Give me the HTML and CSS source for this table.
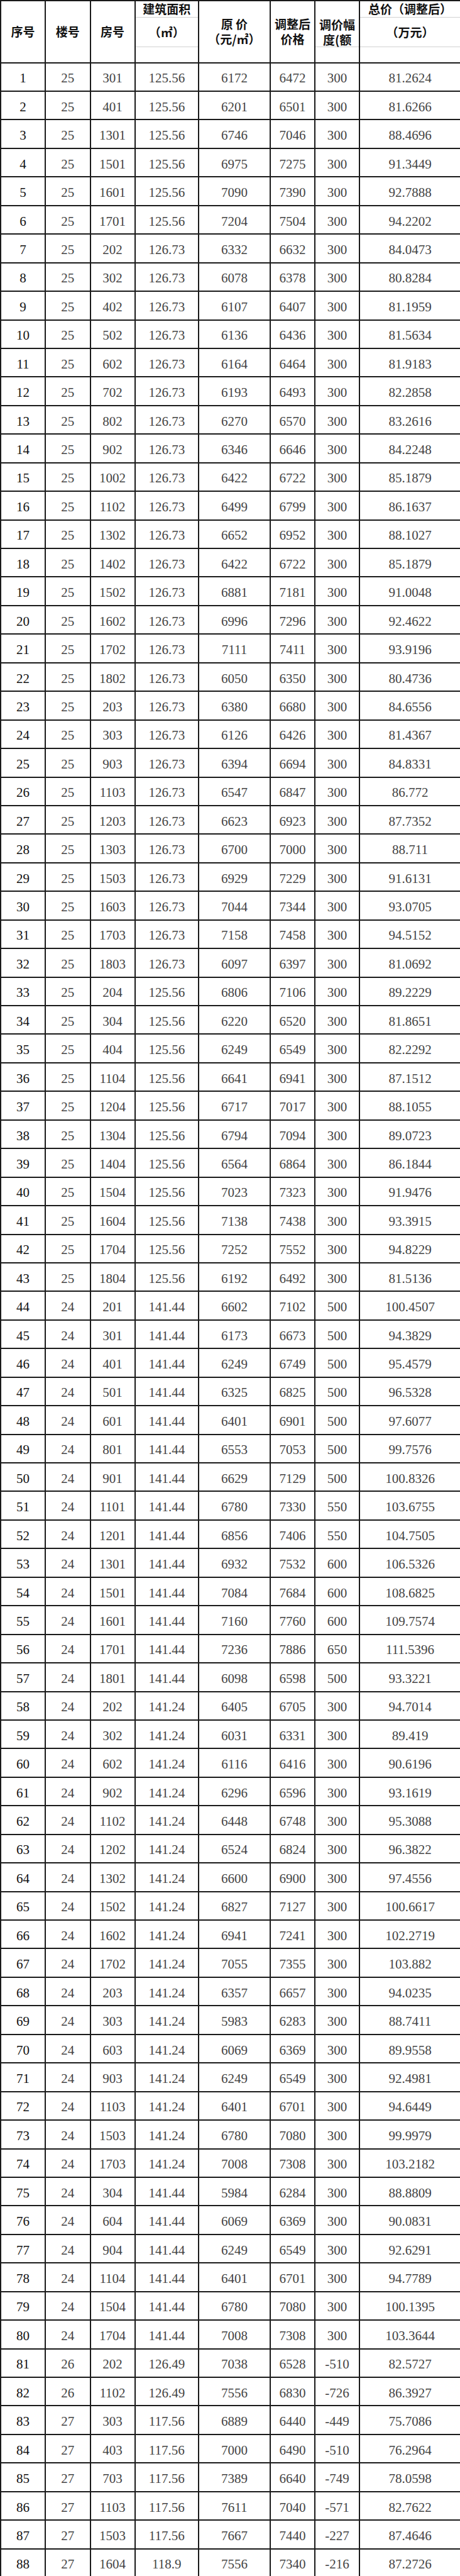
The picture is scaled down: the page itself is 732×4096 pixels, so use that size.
FILE: index.html
```html
<!DOCTYPE html>
<html lang="zh-CN">
<head>
<meta charset="utf-8">
<title>调价表</title>
<link rel="stylesheet" href="styles.css">
</head>
<body>
<table class="price">
<colgroup>
<col class="c1"><col class="c2"><col class="c3"><col class="c4"><col class="c5"><col class="c6"><col class="c7"><col class="c8">
</colgroup>
<thead>
<tr class="ha">
<th rowspan="3">序号</th>
<th rowspan="3">楼号</th>
<th rowspan="3">房号</th>
<th class="g-bottom">建筑面积</th>
<th rowspan="3">原 价<br>（元/㎡）</th>
<th rowspan="3">调整后<br>价格</th>
<th rowspan="2" class="g-bottom adj"><div class="adj-box">调价幅<br>度(额</div></th>
<th class="g-bottom">总价（调整后）</th>
</tr>
<tr class="hb">
<th class="g-top g-bottom">（㎡）</th>
<th class="g-top g-bottom">（万元）</th>
</tr>
<tr class="hc">
<th class="g-top"></th>
<th class="g-top"></th>
<th class="g-top"></th>
</tr>
</thead>
<tbody>
<tr><td class="seq">1</td><td>25</td><td>301</td><td>125.56</td><td>6172</td><td>6472</td><td>300</td><td>81.2624</td></tr>
<tr><td class="seq">2</td><td>25</td><td>401</td><td>125.56</td><td>6201</td><td>6501</td><td>300</td><td>81.6266</td></tr>
<tr><td class="seq">3</td><td>25</td><td>1301</td><td>125.56</td><td>6746</td><td>7046</td><td>300</td><td>88.4696</td></tr>
<tr><td class="seq">4</td><td>25</td><td>1501</td><td>125.56</td><td>6975</td><td>7275</td><td>300</td><td>91.3449</td></tr>
<tr><td class="seq">5</td><td>25</td><td>1601</td><td>125.56</td><td>7090</td><td>7390</td><td>300</td><td>92.7888</td></tr>
<tr><td class="seq">6</td><td>25</td><td>1701</td><td>125.56</td><td>7204</td><td>7504</td><td>300</td><td>94.2202</td></tr>
<tr><td class="seq">7</td><td>25</td><td>202</td><td>126.73</td><td>6332</td><td>6632</td><td>300</td><td>84.0473</td></tr>
<tr><td class="seq">8</td><td>25</td><td>302</td><td>126.73</td><td>6078</td><td>6378</td><td>300</td><td>80.8284</td></tr>
<tr><td class="seq">9</td><td>25</td><td>402</td><td>126.73</td><td>6107</td><td>6407</td><td>300</td><td>81.1959</td></tr>
<tr><td class="seq">10</td><td>25</td><td>502</td><td>126.73</td><td>6136</td><td>6436</td><td>300</td><td>81.5634</td></tr>
<tr><td class="seq">11</td><td>25</td><td>602</td><td>126.73</td><td>6164</td><td>6464</td><td>300</td><td>81.9183</td></tr>
<tr><td class="seq">12</td><td>25</td><td>702</td><td>126.73</td><td>6193</td><td>6493</td><td>300</td><td>82.2858</td></tr>
<tr><td class="seq">13</td><td>25</td><td>802</td><td>126.73</td><td>6270</td><td>6570</td><td>300</td><td>83.2616</td></tr>
<tr><td class="seq">14</td><td>25</td><td>902</td><td>126.73</td><td>6346</td><td>6646</td><td>300</td><td>84.2248</td></tr>
<tr><td class="seq">15</td><td>25</td><td>1002</td><td>126.73</td><td>6422</td><td>6722</td><td>300</td><td>85.1879</td></tr>
<tr><td class="seq">16</td><td>25</td><td>1102</td><td>126.73</td><td>6499</td><td>6799</td><td>300</td><td>86.1637</td></tr>
<tr><td class="seq">17</td><td>25</td><td>1302</td><td>126.73</td><td>6652</td><td>6952</td><td>300</td><td>88.1027</td></tr>
<tr><td class="seq">18</td><td>25</td><td>1402</td><td>126.73</td><td>6422</td><td>6722</td><td>300</td><td>85.1879</td></tr>
<tr><td class="seq">19</td><td>25</td><td>1502</td><td>126.73</td><td>6881</td><td>7181</td><td>300</td><td>91.0048</td></tr>
<tr><td class="seq">20</td><td>25</td><td>1602</td><td>126.73</td><td>6996</td><td>7296</td><td>300</td><td>92.4622</td></tr>
<tr><td class="seq">21</td><td>25</td><td>1702</td><td>126.73</td><td>7111</td><td>7411</td><td>300</td><td>93.9196</td></tr>
<tr><td class="seq">22</td><td>25</td><td>1802</td><td>126.73</td><td>6050</td><td>6350</td><td>300</td><td>80.4736</td></tr>
<tr><td class="seq">23</td><td>25</td><td>203</td><td>126.73</td><td>6380</td><td>6680</td><td>300</td><td>84.6556</td></tr>
<tr><td class="seq">24</td><td>25</td><td>303</td><td>126.73</td><td>6126</td><td>6426</td><td>300</td><td>81.4367</td></tr>
<tr><td class="seq">25</td><td>25</td><td>903</td><td>126.73</td><td>6394</td><td>6694</td><td>300</td><td>84.8331</td></tr>
<tr><td class="seq">26</td><td>25</td><td>1103</td><td>126.73</td><td>6547</td><td>6847</td><td>300</td><td>86.772</td></tr>
<tr><td class="seq">27</td><td>25</td><td>1203</td><td>126.73</td><td>6623</td><td>6923</td><td>300</td><td>87.7352</td></tr>
<tr><td class="seq">28</td><td>25</td><td>1303</td><td>126.73</td><td>6700</td><td>7000</td><td>300</td><td>88.711</td></tr>
<tr><td class="seq">29</td><td>25</td><td>1503</td><td>126.73</td><td>6929</td><td>7229</td><td>300</td><td>91.6131</td></tr>
<tr><td class="seq">30</td><td>25</td><td>1603</td><td>126.73</td><td>7044</td><td>7344</td><td>300</td><td>93.0705</td></tr>
<tr><td class="seq">31</td><td>25</td><td>1703</td><td>126.73</td><td>7158</td><td>7458</td><td>300</td><td>94.5152</td></tr>
<tr><td class="seq">32</td><td>25</td><td>1803</td><td>126.73</td><td>6097</td><td>6397</td><td>300</td><td>81.0692</td></tr>
<tr><td class="seq">33</td><td>25</td><td>204</td><td>125.56</td><td>6806</td><td>7106</td><td>300</td><td>89.2229</td></tr>
<tr><td class="seq">34</td><td>25</td><td>304</td><td>125.56</td><td>6220</td><td>6520</td><td>300</td><td>81.8651</td></tr>
<tr><td class="seq">35</td><td>25</td><td>404</td><td>125.56</td><td>6249</td><td>6549</td><td>300</td><td>82.2292</td></tr>
<tr><td class="seq">36</td><td>25</td><td>1104</td><td>125.56</td><td>6641</td><td>6941</td><td>300</td><td>87.1512</td></tr>
<tr><td class="seq">37</td><td>25</td><td>1204</td><td>125.56</td><td>6717</td><td>7017</td><td>300</td><td>88.1055</td></tr>
<tr><td class="seq">38</td><td>25</td><td>1304</td><td>125.56</td><td>6794</td><td>7094</td><td>300</td><td>89.0723</td></tr>
<tr><td class="seq">39</td><td>25</td><td>1404</td><td>125.56</td><td>6564</td><td>6864</td><td>300</td><td>86.1844</td></tr>
<tr><td class="seq">40</td><td>25</td><td>1504</td><td>125.56</td><td>7023</td><td>7323</td><td>300</td><td>91.9476</td></tr>
<tr><td class="seq">41</td><td>25</td><td>1604</td><td>125.56</td><td>7138</td><td>7438</td><td>300</td><td>93.3915</td></tr>
<tr><td class="seq">42</td><td>25</td><td>1704</td><td>125.56</td><td>7252</td><td>7552</td><td>300</td><td>94.8229</td></tr>
<tr><td class="seq">43</td><td>25</td><td>1804</td><td>125.56</td><td>6192</td><td>6492</td><td>300</td><td>81.5136</td></tr>
<tr><td class="seq">44</td><td>24</td><td>201</td><td>141.44</td><td>6602</td><td>7102</td><td>500</td><td>100.4507</td></tr>
<tr><td class="seq">45</td><td>24</td><td>301</td><td>141.44</td><td>6173</td><td>6673</td><td>500</td><td>94.3829</td></tr>
<tr><td class="seq">46</td><td>24</td><td>401</td><td>141.44</td><td>6249</td><td>6749</td><td>500</td><td>95.4579</td></tr>
<tr><td class="seq">47</td><td>24</td><td>501</td><td>141.44</td><td>6325</td><td>6825</td><td>500</td><td>96.5328</td></tr>
<tr><td class="seq">48</td><td>24</td><td>601</td><td>141.44</td><td>6401</td><td>6901</td><td>500</td><td>97.6077</td></tr>
<tr><td class="seq">49</td><td>24</td><td>801</td><td>141.44</td><td>6553</td><td>7053</td><td>500</td><td>99.7576</td></tr>
<tr><td class="seq">50</td><td>24</td><td>901</td><td>141.44</td><td>6629</td><td>7129</td><td>500</td><td>100.8326</td></tr>
<tr><td class="seq">51</td><td>24</td><td>1101</td><td>141.44</td><td>6780</td><td>7330</td><td>550</td><td>103.6755</td></tr>
<tr><td class="seq">52</td><td>24</td><td>1201</td><td>141.44</td><td>6856</td><td>7406</td><td>550</td><td>104.7505</td></tr>
<tr><td class="seq">53</td><td>24</td><td>1301</td><td>141.44</td><td>6932</td><td>7532</td><td>600</td><td>106.5326</td></tr>
<tr><td class="seq">54</td><td>24</td><td>1501</td><td>141.44</td><td>7084</td><td>7684</td><td>600</td><td>108.6825</td></tr>
<tr><td class="seq">55</td><td>24</td><td>1601</td><td>141.44</td><td>7160</td><td>7760</td><td>600</td><td>109.7574</td></tr>
<tr><td class="seq">56</td><td>24</td><td>1701</td><td>141.44</td><td>7236</td><td>7886</td><td>650</td><td>111.5396</td></tr>
<tr><td class="seq">57</td><td>24</td><td>1801</td><td>141.44</td><td>6098</td><td>6598</td><td>500</td><td>93.3221</td></tr>
<tr><td class="seq">58</td><td>24</td><td>202</td><td>141.24</td><td>6405</td><td>6705</td><td>300</td><td>94.7014</td></tr>
<tr><td class="seq">59</td><td>24</td><td>302</td><td>141.24</td><td>6031</td><td>6331</td><td>300</td><td>89.419</td></tr>
<tr><td class="seq">60</td><td>24</td><td>602</td><td>141.24</td><td>6116</td><td>6416</td><td>300</td><td>90.6196</td></tr>
<tr><td class="seq">61</td><td>24</td><td>902</td><td>141.24</td><td>6296</td><td>6596</td><td>300</td><td>93.1619</td></tr>
<tr><td class="seq">62</td><td>24</td><td>1102</td><td>141.24</td><td>6448</td><td>6748</td><td>300</td><td>95.3088</td></tr>
<tr><td class="seq">63</td><td>24</td><td>1202</td><td>141.24</td><td>6524</td><td>6824</td><td>300</td><td>96.3822</td></tr>
<tr><td class="seq">64</td><td>24</td><td>1302</td><td>141.24</td><td>6600</td><td>6900</td><td>300</td><td>97.4556</td></tr>
<tr><td class="seq">65</td><td>24</td><td>1502</td><td>141.24</td><td>6827</td><td>7127</td><td>300</td><td>100.6617</td></tr>
<tr><td class="seq">66</td><td>24</td><td>1602</td><td>141.24</td><td>6941</td><td>7241</td><td>300</td><td>102.2719</td></tr>
<tr><td class="seq">67</td><td>24</td><td>1702</td><td>141.24</td><td>7055</td><td>7355</td><td>300</td><td>103.882</td></tr>
<tr><td class="seq">68</td><td>24</td><td>203</td><td>141.24</td><td>6357</td><td>6657</td><td>300</td><td>94.0235</td></tr>
<tr><td class="seq">69</td><td>24</td><td>303</td><td>141.24</td><td>5983</td><td>6283</td><td>300</td><td>88.7411</td></tr>
<tr><td class="seq">70</td><td>24</td><td>603</td><td>141.24</td><td>6069</td><td>6369</td><td>300</td><td>89.9558</td></tr>
<tr><td class="seq">71</td><td>24</td><td>903</td><td>141.24</td><td>6249</td><td>6549</td><td>300</td><td>92.4981</td></tr>
<tr><td class="seq">72</td><td>24</td><td>1103</td><td>141.24</td><td>6401</td><td>6701</td><td>300</td><td>94.6449</td></tr>
<tr><td class="seq">73</td><td>24</td><td>1503</td><td>141.24</td><td>6780</td><td>7080</td><td>300</td><td>99.9979</td></tr>
<tr><td class="seq">74</td><td>24</td><td>1703</td><td>141.24</td><td>7008</td><td>7308</td><td>300</td><td>103.2182</td></tr>
<tr><td class="seq">75</td><td>24</td><td>304</td><td>141.44</td><td>5984</td><td>6284</td><td>300</td><td>88.8809</td></tr>
<tr><td class="seq">76</td><td>24</td><td>604</td><td>141.44</td><td>6069</td><td>6369</td><td>300</td><td>90.0831</td></tr>
<tr><td class="seq">77</td><td>24</td><td>904</td><td>141.44</td><td>6249</td><td>6549</td><td>300</td><td>92.6291</td></tr>
<tr><td class="seq">78</td><td>24</td><td>1104</td><td>141.44</td><td>6401</td><td>6701</td><td>300</td><td>94.7789</td></tr>
<tr><td class="seq">79</td><td>24</td><td>1504</td><td>141.44</td><td>6780</td><td>7080</td><td>300</td><td>100.1395</td></tr>
<tr><td class="seq">80</td><td>24</td><td>1704</td><td>141.44</td><td>7008</td><td>7308</td><td>300</td><td>103.3644</td></tr>
<tr><td class="seq">81</td><td>26</td><td>202</td><td>126.49</td><td>7038</td><td>6528</td><td>-510</td><td>82.5727</td></tr>
<tr><td class="seq">82</td><td>26</td><td>1102</td><td>126.49</td><td>7556</td><td>6830</td><td>-726</td><td>86.3927</td></tr>
<tr><td class="seq">83</td><td>27</td><td>303</td><td>117.56</td><td>6889</td><td>6440</td><td>-449</td><td>75.7086</td></tr>
<tr><td class="seq">84</td><td>27</td><td>403</td><td>117.56</td><td>7000</td><td>6490</td><td>-510</td><td>76.2964</td></tr>
<tr><td class="seq">85</td><td>27</td><td>703</td><td>117.56</td><td>7389</td><td>6640</td><td>-749</td><td>78.0598</td></tr>
<tr><td class="seq">86</td><td>27</td><td>1103</td><td>117.56</td><td>7611</td><td>7040</td><td>-571</td><td>82.7622</td></tr>
<tr><td class="seq">87</td><td>27</td><td>1503</td><td>117.56</td><td>7667</td><td>7440</td><td>-227</td><td>87.4646</td></tr>
<tr><td class="seq">88</td><td>27</td><td>1604</td><td>118.9</td><td>7556</td><td>7340</td><td>-216</td><td>87.2726</td></tr>
</tbody>
</table>
</body>
</html>
```
FILE: styles.css
```css
html, body {
  margin: 0;
  padding: 0;
  background: #fff;
}

.price {
  border-collapse: collapse;
  table-layout: fixed;
  width: 732px;
}

.c1 { width: 71px; }
.c2 { width: 71.5px; }
.c3 { width: 71px; }
.c4 { width: 101.7px; }
.c5 { width: 113.5px; }
.c6 { width: 71.4px; }
.c7 { width: 71px; }
.c8 { width: 160.9px; }

.price th,
.price td {
  border: 2px solid #1a1a1a;
  padding: 0;
  text-align: center;
  vertical-align: middle;
  white-space: nowrap;
}

.price th {
  font-family: "Noto Sans CJK SC", "Noto Sans CJK JP", sans-serif;
  font-weight: bold;
  font-size: 19px;
  line-height: 24.7px;
  color: #111;
}

.ha { height: 25.7px; }
.hb { height: 47.4px; }
.hc { height: 25px; }

.price th.g-bottom { border-bottom: 1px solid #d2d2d2; }
.price th.g-top { border-top: 1px solid #d2d2d2; }

.price th.adj {
  vertical-align: top;
}

.adj-box {
  height: 72px;
  box-sizing: border-box;
  padding-top: 25px;
  line-height: 23.5px;
}

.price tbody tr { height: 45.44px; }

.price td {
  font-family: "Liberation Serif", "DejaVu Serif", serif;
  font-size: 21px;
  line-height: 24px;
  color: #444;
  padding-top: 4px;
}

.price td.seq {
  color: #111;
}
```
